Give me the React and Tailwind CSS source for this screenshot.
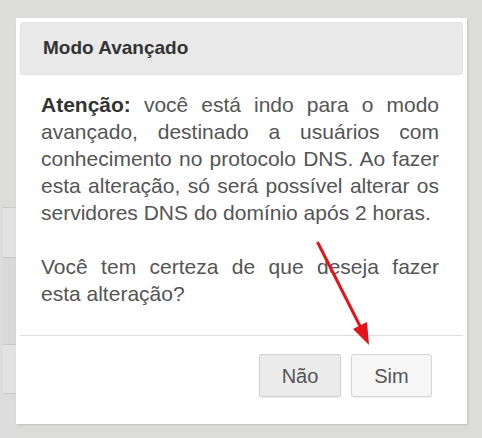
export default function App() {
  return (
    <div
      className="relative w-[482px] h-[438px] overflow-hidden bg-[#dcdcdb] flex"
      style={{ fontFamily: '"Liberation Sans", Arial, sans-serif' }}
    >
      {/* background table strip behind the modal */}
      <div className="ml-[3px] w-[13px] flex flex-col pt-[207px]">
        <div className="h-[50px] border-t border-[#c9c9c9] bg-[#e2e2e2]" />
        <div className="h-[87px] border-t border-[#c9c9c9] bg-[#d9d9d9]" />
        <div className="h-[49px] border-t border-[#c9c9c9] bg-[#e2e2e2]" />
        <div className="flex-1 border-t border-[#c9c9c9] bg-[#dcdcdc]" />
      </div>

      {/* modal */}
      <div className="mt-[18px] w-[451px] h-[406px] bg-white p-[4px] flex flex-col shadow-[1px_1px_2px_rgba(0,0,0,0.12)]">
        <div className="h-[53px] shrink-0 rounded-[3px] bg-[#e9e9e9] border border-[#e2e2e2] flex items-center pl-[22px]">
          <span className="text-[19px] font-bold text-[#333]">Modo Avançado</span>
        </div>
        <div className="pt-[16px] pl-[21px] pr-[24px] pb-[28px] text-[21px] leading-[27px] text-[#555] text-justify">
          <p>
            <b className="text-[#333]">Atenção:</b> você está indo para o modo avançado, destinado a usuários com
            conhecimento no protocolo DNS. Ao fazer esta alteração, só será possível alterar os servidores DNS do
            domínio após 2 horas.
          </p>
          <p className="mt-[27px]">Você tem certeza de que deseja fazer esta alteração?</p>
        </div>
        <div className="border-t border-[#dedede]" />
        <div className="flex justify-end gap-[10px] pt-[18px] pr-[31px]">
          <button className="w-[82px] h-[43px] rounded-[3px] border border-[#cfcfcf] bg-[#ebebeb] text-[20px] text-[#555] shadow-[0_1px_1px_rgba(0,0,0,0.06)]">
            Não
          </button>
          <button className="w-[81px] h-[43px] rounded-[3px] border border-[#d4d4d4] bg-[#f6f6f6] text-[20px] text-[#555] shadow-[0_1px_1px_rgba(0,0,0,0.06)]">
            Sim
          </button>
        </div>
      </div>

      {/* red annotation arrow */}
      <svg className="absolute inset-0 pointer-events-none" width="482" height="438" viewBox="0 0 482 438">
        <line x1="318" y1="243" x2="361" y2="328" stroke="#e3141b" strokeWidth="3" strokeLinecap="round" />
        <polygon points="369,345 353,329 367,322" fill="#e3141b" />
      </svg>
    </div>
  );
}
